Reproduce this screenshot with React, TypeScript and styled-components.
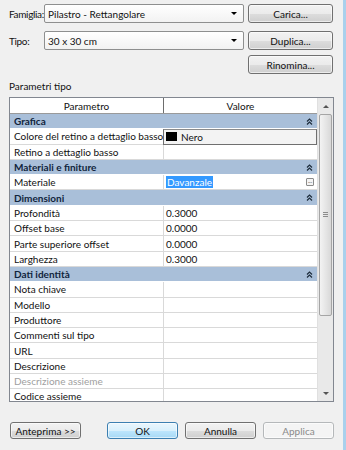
import React from "react";
import styled, { createGlobalStyle } from "styled-components";

const Global = createGlobalStyle`
  html, body { margin: 0; padding: 0; }
  body {
    width: 346px; height: 450px; overflow: hidden;
    background: #f0f0f0;
    font-family: "Lato", "Noto Sans", sans-serif;
    font-size: 10px;
    color: #111;
  }
  * { box-sizing: border-box; }
`;

const Frame = styled.div`
  width: 346px;
  height: 450px;
  background: #f0f0f0;
  border-right: 3px solid #a9d0ec;
  padding: 4px 10px 0 9px;
  display: flex;
  flex-direction: column;
`;

const FieldRow = styled.div<{ $mb?: number }>`
  display: flex;
  align-items: center;
  height: 19px;
  margin-bottom: ${(p) => p.$mb ?? 0}px;
`;

const Label = styled.div`
  width: 35px;
  flex: none;
  white-space: nowrap;
  letter-spacing: -0.35px;
`;

const Select = styled.div`
  width: 201px;
  height: 19px;
  margin-right: 4px;
  border: 1px solid #8e8f8f;
  border-radius: 2px;
  background: linear-gradient(#ffffff, #f2f2f2);
  display: flex;
  align-items: center;
  padding: 0 6px 0 3px;
`;

const SelectText = styled.span`
  flex: 1;
`;

const Arrow = styled.span`
  width: 0; height: 0;
  border-left: 3px solid transparent;
  border-right: 3px solid transparent;
  border-top: 3px solid #000;
`;

const Button = styled.div<{ $w?: number; $h?: number; $variant?: "default" | "disabled" | "normal" }>`
  width: ${(p) => p.$w ?? 85}px;
  height: ${(p) => p.$h ?? 19}px;
  flex: none;
  border: 1px solid ${(p) => (p.$variant === "default" ? "#3c7fb1" : p.$variant === "disabled" ? "#b5b8ba" : "#707070")};
  border-radius: 3px;
  background: ${(p) =>
    p.$variant === "disabled"
      ? "#f4f4f4"
      : p.$variant === "default"
      ? "linear-gradient(#eaf6fd 0%, #d9f0fc 50%, #bee6fd 51%, #a7d9f5 100%)"
      : "linear-gradient(#f2f2f2 0%, #ebebeb 50%, #dddddd 51%, #cfcfcf 100%)"};
  color: ${(p) => (p.$variant === "disabled" ? "#8a8a8a" : "#111")};
  display: flex;
  align-items: center;
  justify-content: center;
  box-shadow: inset 0 0 0 1px rgba(255, 255, 255, 0.6);
`;

const RightAligned = styled.div`
  display: flex;
  justify-content: flex-end;
  margin-bottom: 6px;
`;

const SectionTitle = styled.div`
  height: 12px;
  line-height: 12px;
  margin-bottom: 5px;
`;

const TableBox = styled.div`
  width: 325px;
  height: 305px;
  border: 1px solid #828790;
  display: flex;
  background: #fff;
`;

const Grid = styled.div`
  flex: 1;
  overflow: hidden;
  display: flex;
  flex-direction: column;
`;

const HeaderRow = styled.div`
  display: grid;
  grid-template-columns: 154px 1fr;
  height: 16px;
  border-bottom: 1px solid #9a9a9a;
  flex: none;
`;

const HeaderCell = styled.div<{ $last?: boolean }>`
  display: flex;
  align-items: center;
  justify-content: center;
  border-right: ${(p) => (p.$last ? "none" : "1px solid #6d6d6d")};
`;

const GroupRow = styled.div`
  height: 15.3px;
  flex: none;
  background: #a9bfd9;
  border-bottom: 1px solid #fff;
  display: flex;
  align-items: center;
  padding: 0 4px 0 4px;
  font-weight: bold;
  color: #10243c;
`;

const GroupTitle = styled.span`
  flex: 1;
`;

const DataRow = styled.div`
  height: 15.3px;
  flex: none;
  display: grid;
  grid-template-columns: 154px 1fr;
  border-bottom: 1px solid #d9d9d9;
`;

const NameCell = styled.div<{ $disabled?: boolean }>`
  border-right: 1px solid #d9d9d9;
  padding-left: 4px;
  display: flex;
  align-items: center;
  white-space: nowrap;
  overflow: hidden;
  color: ${(p) => (p.$disabled ? "#a0a0a0" : "#111")};
`;

const ValueCell = styled.div<{ $boxed?: boolean }>`
  display: flex;
  align-items: center;
  padding-left: 2px;
  padding-right: 3px;
  ${(p) =>
    p.$boxed
      ? `border: 1px solid #6f6f6f; border-top-color:#8a8a8a; background:#f3f3f3; margin: 0 0 -1px -1px; padding-left: 2px;`
      : ""}
`;

const Swatch = styled.span`
  width: 11px;
  height: 9px;
  background: #000;
  margin-right: 4px;
`;

const Selected = styled.span`
  background: #3399ff;
  color: #fff;
  padding: 0 1px;
  line-height: 12px;
`;

const Spacer = styled.span`
  flex: 1;
`;

const Ellipsis = styled.span`
  width: 8px;
  height: 8px;
  border: 1px solid #8a8a8a;
  border-radius: 1px;
  background: #f4f4f4;
  font-size: 6px;
  line-height: 4px;
  text-align: center;
  color: #333;
`;

const ScrollBar = styled.div`
  width: 16px;
  flex: none;
  background: #e9e9e9;
  border-left: 1px solid #e0e0e0;
  display: flex;
  flex-direction: column;
  align-items: center;
`;

const ScrollArrow = styled.div<{ $down?: boolean }>`
  height: 16px;
  width: 100%;
  display: flex;
  align-items: center;
  justify-content: center;
  &::after {
    content: "";
    border-left: 3px solid transparent;
    border-right: 3px solid transparent;
    ${(p) => (p.$down ? "border-top: 3px solid #555;" : "border-bottom: 3px solid #555;")}
  }
`;

const Thumb = styled.div`
  width: 13px;
  height: 202px;
  border: 1px solid #a5a5a5;
  border-radius: 2px;
  background: linear-gradient(90deg, #f3f3f3, #e6e6e6 50%, #d8d8d8);
  display: flex;
  align-items: center;
  justify-content: center;
`;

const Grip = styled.div`
  width: 5px;
  height: 6px;
  background: repeating-linear-gradient(#8c8c8c 0 1px, transparent 1px 2px);
`;

const Track = styled.div`
  flex: 1;
`;

const Footer = styled.div`
  display: flex;
  margin-top: 20px;
  padding-left: 1px;
`;

const Chevrons = () => (
  <svg width="7" height="7" viewBox="0 0 7 7">
    <polyline points="1,3.5 3.5,1 6,3.5" fill="none" stroke="#1d2c3c" strokeWidth="1.2" />
    <polyline points="1,6.5 3.5,4 6,6.5" fill="none" stroke="#1d2c3c" strokeWidth="1.2" />
  </svg>
);

type Row = { name: string; value?: React.ReactNode; boxed?: boolean; disabled?: boolean };
type Group = { title: string; rows: Row[] };

const groups: Group[] = [
  {
    title: "Grafica",
    rows: [
      {
        name: "Colore del retino a dettaglio basso",
        boxed: true,
        value: (
          <>
            <Swatch />
            Nero
          </>
        ),
      },
      { name: "Retino a dettaglio basso" },
    ],
  },
  {
    title: "Materiali e finiture",
    rows: [
      {
        name: "Materiale",
        value: (
          <>
            <Selected>Davanzale</Selected>
            <Spacer />
            <Ellipsis>...</Ellipsis>
          </>
        ),
      },
    ],
  },
  {
    title: "Dimensioni",
    rows: [
      { name: "Profondità", value: "0.3000" },
      { name: "Offset base", value: "0.0000" },
      { name: "Parte superiore offset", value: "0.0000" },
      { name: "Larghezza", value: "0.3000" },
    ],
  },
  {
    title: "Dati identità",
    rows: [
      { name: "Nota chiave" },
      { name: "Modello" },
      { name: "Produttore" },
      { name: "Commenti sul tipo" },
      { name: "URL" },
      { name: "Descrizione" },
      { name: "Descrizione assieme", disabled: true },
      { name: "Codice assieme" },
    ],
  },
];

export default function App() {
  return (
    <>
      <Global />
      <Frame>
        <FieldRow $mb={8}>
          <Label>Famiglia:</Label>
          <Select>
            <SelectText>Pilastro - Rettangolare</SelectText>
            <Arrow />
          </Select>
          <Button>Carica...</Button>
        </FieldRow>
        <FieldRow $mb={5}>
          <Label>Tipo:</Label>
          <Select>
            <SelectText>30 x 30 cm</SelectText>
            <Arrow />
          </Select>
          <Button>Duplica...</Button>
        </FieldRow>
        <RightAligned>
          <Button>Rinomina...</Button>
        </RightAligned>
        <SectionTitle>Parametri tipo</SectionTitle>
        <TableBox>
          <Grid>
            <HeaderRow>
              <HeaderCell>Parametro</HeaderCell>
              <HeaderCell $last>Valore</HeaderCell>
            </HeaderRow>
            {groups.map((g) => (
              <React.Fragment key={g.title}>
                <GroupRow>
                  <GroupTitle>{g.title}</GroupTitle>
                  <Chevrons />
                </GroupRow>
                {g.rows.map((r) => (
                  <DataRow key={r.name}>
                    <NameCell $disabled={r.disabled}>{r.name}</NameCell>
                    <ValueCell $boxed={r.boxed}>{r.value}</ValueCell>
                  </DataRow>
                ))}
              </React.Fragment>
            ))}
          </Grid>
          <ScrollBar>
            <ScrollArrow />
            <Thumb>
              <Grip />
            </Thumb>
            <Track />
            <ScrollArrow $down />
          </ScrollBar>
        </TableBox>
        <Footer>
          <Button $w={71} $h={17}>Anteprima &gt;&gt;</Button>
          <Button $w={71} $h={17} $variant="default" style={{ marginLeft: 26 }}>
            OK
          </Button>
          <Button $w={71} $h={17} style={{ marginLeft: 7 }}>
            Annulla
          </Button>
          <Button $w={71} $h={17} $variant="disabled" style={{ marginLeft: 7 }}>
            Applica
          </Button>
        </Footer>
      </Frame>
    </>
  );
}
